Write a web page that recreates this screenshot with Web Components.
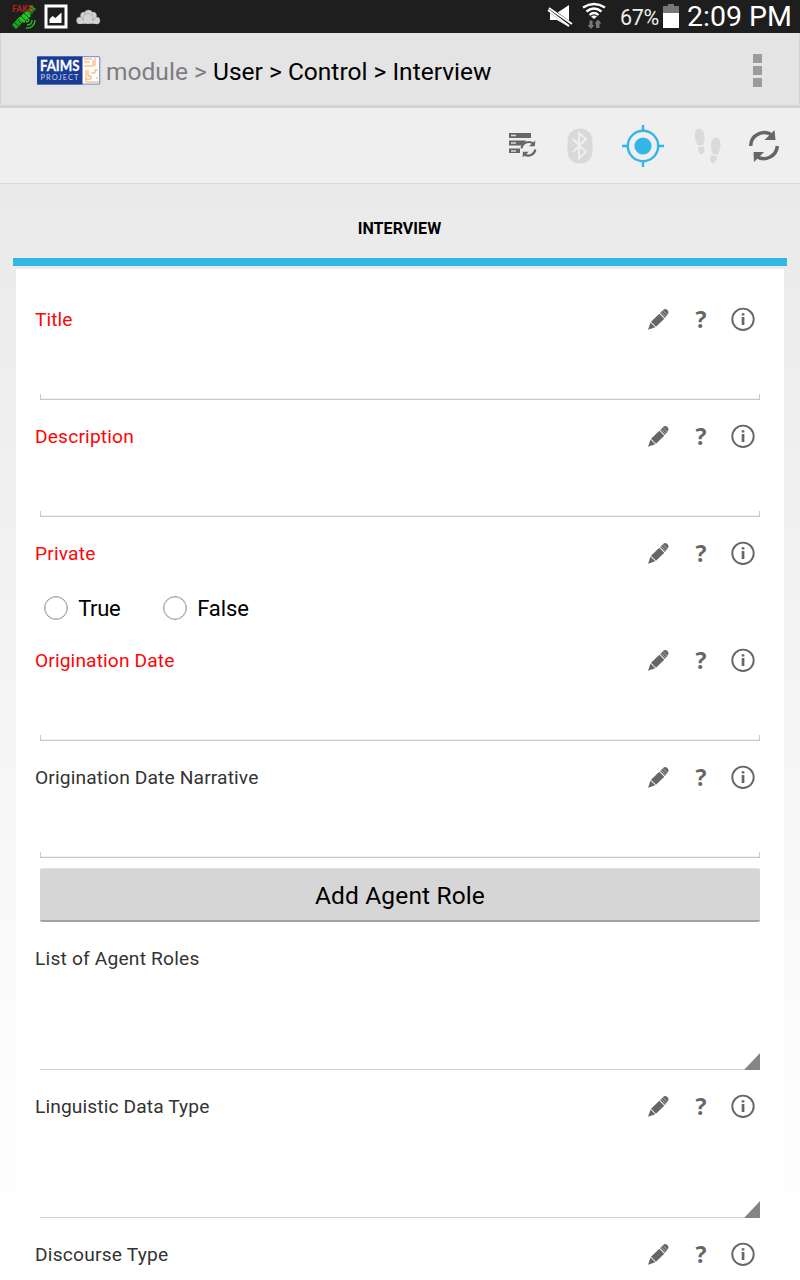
<!DOCTYPE html>
<html lang="en"><head><meta charset="utf-8"><title>Interview</title>
<style>html,body{margin:0;height:1280px;overflow:hidden;font-family:Roboto,"Noto Sans",sans-serif;color:#000}</style></head>
<body><faims-screen></faims-screen>
<script>
const define=(name,html,setup)=>customElements.define(name,class extends HTMLElement{
  connectedCallback(){
    if(this.shadowRoot)return;
    const t=document.createElement('template');t.innerHTML=html;
    this.attachShadow({mode:'open'}).append(t.content.cloneNode(true));
    if(setup)setup(this,this.shadowRoot);
  }
});

/* Text whose tracking is spread so that the line has the given width. */
define('tracked-text',`<style>:host{display:inline-block;white-space:pre}span{display:inline-block;white-space:pre}</style><span><slot></slot></span>`,(el,root)=>{
  const s=root.querySelector('span'),w=+el.getAttribute('width'),n=el.textContent.length;
  if(w)s.style.letterSpacing=((w-s.getBoundingClientRect().width)/n).toFixed(3)+'px';
});

const icons={
gps:[28,28,`<g transform="translate(0 1)"><path d="M1 21 8 13l5 4-8 8zM14 10l6-9 5 4-8 8z" fill="#18a51b"/><path d="m8 14 7-7 5 5-7 7z" fill="#1fc522"/><path d="m4 19 5 4M7 16l4 4M17 6l5 4M19 3l4 4M10 12l6 6M13 9l5 5" stroke="#174d17" stroke-width="1"/><path d="M15 24c5 1 9-3 9-8M16 21c3 0 5-2 5-5M15 18c2 0 3-1 3-3" fill="none" stroke="#26bd26" stroke-width="1.4"/><text x="1" y="8" textLength="21" lengthAdjust="spacingAndGlyphs" font-family="Roboto" font-weight="700" font-size="8.500" fill="#a82518">FAKE</text></g>`],
photo:[24,26,`<path d="M2 2h20v21H2z" fill="#1e1e1e" stroke="#fff" stroke-width="3"/><path d="M5.500 19v-4l3-3 3 2 6-5.500V19z" fill="#fff"/>`],
cloud:[25,16,`<g fill="#d2d2d2" stroke="#999" stroke-width=".5"><circle cx="4" cy="10.500" r="3.500"/><circle cx="20.500" cy="10.500" r="3.500"/><circle cx="8" cy="5.500" r="3.500"/><circle cx="17" cy="5.500" r="3.500"/><circle cx="12.500" cy="4" r="4"/><circle cx="12" cy="8.500" r="5"/></g><path d="M2 13.800q4-4 10-3 6-1 11 3z" fill="#d2d2d2"/>`],
mute:[24,24,`<path d="M1 8h7L20 0v22L8 15H1z" fill="#fff"/><path d="m0 4 23 17" stroke="#1e1e1e" stroke-width="5"/><path d="m0 3 23 16M-1 5l21 16" stroke="#fff" stroke-width="1.900" fill="none"/>`],
wifi:[24,26,`<g fill="none" stroke="#fff" stroke-width="2.300"><path d="M1 4.500q11-7 22 0M4.500 8.500q7.500-6 15 0M7.500 12q4.500-4 9 0"/></g><path d="m9 13.500 3 2.500 3-2.500q-3-2-6 0z" fill="#fff"/><path d="M7.500 17.500h3V22h2l-3.500 4L5.500 22h2zM14 25v-4.500h-1.500l3.500-4 3.500 4h-2V25z" fill="#777"/>`],
battery:[16,24,`<path d="M5 0h6v2h5v22H0V2h5z" fill="#777"/><path d="M0 9h16v15H0z" fill="#fff"/>`],
logo:[64,29,`<rect x=".7" y=".7" width="62" height="27.500" rx="1" fill="#fff" stroke="#899bcb" stroke-width="1.300"/><path d="M0 .500h45.500v28H0z" fill="#193c96"/><text x="3" y="15" textLength="39.500" lengthAdjust="spacingAndGlyphs" font-family="Lato" font-weight="700" font-size="15.500" fill="#fff" stroke="#fff" stroke-width=".3">FAIMS</text><text x="3.500" y="24" textLength="38" lengthAdjust="spacing" font-family="Lato" font-size="7.500" fill="#ccd5ed">PROJECT</text><g fill="none" stroke="#f6a55a" stroke-width="1"><path d="M47 3h8M47 6h6M47 10h9V4M58 2v8M49 14v12h13M51 14v6h3v3h-5M54 17h4v-3h3M59 22h2"/></g>`],
more:[12,36,`<path d="M1 1h9v9H1zM1 13h9v9H1zM1 25h9v9H1z" fill="#9b9b9b"/>`],
server:[30,28,`<path d="M1 1h22v5H1zM1 8.500h17l-4 5H1zM1 16.500h11v4.500H1z" fill="#666"/><path d="M3 3.500h5M3 11h5M3 19h5" stroke="#ddd" stroke-width="1.300"/><g transform="translate(12.500 8.500) scale(.53)"><path d="M2 15A13.500 13.500 0 0 1 24 6M28 17A13.500 13.500 0 0 1 7 26" fill="none" stroke="#666" stroke-width="4"/><path d="m28 0-1 11H16zM4 32l.500-11h11z" fill="#666"/></g>`],
bluetooth:[26,36,`<rect x=".5" y=".5" width="25" height="35" rx="12" fill="#d9d9d9"/><path d="m6 11 13 13-7 6V5l7 6L6 24" fill="none" stroke="#efefef" stroke-width="2"/>`],
locate:[42,44,`<g fill="none" stroke="#33b5e5"><circle cx="21" cy="22" r="15.200" stroke-width="2.400"/><path d="M21 1v6M21 37v6M0 22h6M36 22h6" stroke-width="2.400"/></g><circle cx="21" cy="22" r="8.600" fill="#33b5e5"/>`],
steps:[28,36,`<g fill="#dadada"><path d="M5 .500c4-.5 6 6 5.500 10 0 3-1 6-1.500 6.500l-5 .5C2 14 1 11 .8 8 .5 4 2 .8 5 .5zM4 19.500l6-1c1 4 0 7-2 7.500-3 .5-3.500-3-4-6.500zM22 9.500c-4 0-5.500 6-5 10 .2 3 1.500 6 2 6.500l4.500 1c2-3 2.500-6 3-9 .3-5-1.500-8.500-4.500-8.500zM17 27l6 1.500c-.5 4-2 7-4.500 6.500-3-.5-2.500-4-1.500-8z"/></g>`],
sync:[30,32,`<path d="M1.700 16A13.500 13.500 0 0 1 24 6M28.300 16A13.500 13.500 0 0 1 7 26" fill="none" stroke="#666" stroke-width="3.500"/><path d="M25.500 0 26.500 10H15.500zM5 32 4.500 22H15z" fill="#666"/>`],
pencil:[22,22,`<g transform="translate(0 .7)"><path d="M0 21 2.500 13.700 7.300 18.500z" fill="#666"/><path d="M3 13 11.300 5l5 5-8.300 8z" fill="#666"/><path d="M12 4.300 16 .6q1.500-1 3.400.8 2 2 .8 3.500L17 9.300z" fill="#666"/><path d="m13.300 3.500 4.500 4.500M15 1.800l4.500 4.500" stroke="#ccc" stroke-width=".7"/></g>`],
info:[24,24,`<circle cx="12" cy="12.300" r="10.700" fill="none" stroke="#666" stroke-width="1.900"/><path d="M10.700 6.300h2.700v2.200h-2.700zM10.700 10h2.700v8h-2.700z" fill="#666"/>`]
};
define('ui-icon','<style>:host{display:block;flex:none}svg{display:block;overflow:visible}</style><svg></svg>',(el,root)=>{
  const [w,h,p]=icons[el.getAttribute('name')],s=root.querySelector('svg');
  s.setAttribute('width',w);s.setAttribute('height',h);s.setAttribute('viewBox',`0 0 ${w} ${h}`);s.innerHTML=p;
});

define('status-bar',`<style>:host{display:flex;height:33px;background:#1e1e1e;color:#fff;box-sizing:border-box;padding:0 8px 0 11px}
.clock{font-size:28.5px;line-height:33px;margin-left:8px}.pct{font-size:21.5px;line-height:36px;margin-left:14px;color:#eee}</style>
<ui-icon name="gps" style="margin-top:3px"></ui-icon><ui-icon name="photo" style="margin:4px 0 0 5px"></ui-icon><ui-icon name="cloud" style="margin:10px 0 0 8px"></ui-icon><span style="flex:1"></span>
<ui-icon name="mute" style="margin-top:5px"></ui-icon><ui-icon name="wifi" style="margin:3px 0 0 9px"></ui-icon><tracked-text class="pct" width="39">67%</tracked-text><ui-icon name="battery" style="margin:4px 0 0 4px"></ui-icon><tracked-text class="clock" width="105">2:09 PM</tracked-text>`);

define('action-bar',`<style>:host{display:flex;align-items:center;height:75px;box-sizing:border-box;padding:0 35px 0 36px;background:#e4e4e4;border:solid #d3d3d3;border-width:0 1px 3px;font-size:24.5px;line-height:32px}
ui-icon{margin-top:2px}.m,.c{margin-top:5px}.m{color:#7d7c82;margin-left:5px}.r{flex:1}</style><ui-icon name="logo"></ui-icon><tracked-text class="m" width="107">module > </tracked-text><tracked-text class="c" width="278.5">User > Control > Interview</tracked-text><span class="r"></span><ui-icon name="more" style="margin-top:4px"></ui-icon>`);

define('tool-bar',`<style>:host{display:flex;align-items:center;justify-content:flex-end;height:76px;box-sizing:border-box;padding-right:21px;background:#efefef;border-bottom:1px solid #d9d9d9}</style>
<ui-icon name="server"></ui-icon><ui-icon name="bluetooth" style="margin-left:29px"></ui-icon><ui-icon name="locate" style="margin-left:29px"></ui-icon><ui-icon name="steps" style="margin-left:30px"></ui-icon><ui-icon name="sync" style="margin-left:27px"></ui-icon>`);

define('tab-strip',`<style>:host{display:block;height:85px;padding:0 13px}div{height:74px;box-sizing:content-box;display:flex;align-items:center;justify-content:center;font-weight:700;font-size:16px;border-bottom:8px solid #33b5e5}tracked-text{margin:14px 1px 0 0}</style><div><tracked-text width="83.5">INTERVIEW</tracked-text></div>`);

define('form-field',`<style>:host{display:block;color:#333}.l{height:48px;display:flex;align-items:center;padding:0 29px 0 19px;font-size:19.2px}.l tracked-text{padding-top:1px}:host([required]) .l{color:#fc0606}.r{flex:1}.q{width:12px;text-align:center;font:700 23px "Open Sans";line-height:48px;color:#666;margin:0 24px 0 25px}</style>
<div class="l"><tracked-text></tracked-text><span class="r"></span></div><slot></slot>`,(el,root)=>{
  const l=root.querySelector('.l'),old=l.firstElementChild,t=document.createElement('tracked-text');
  t.textContent=el.getAttribute('label');t.setAttribute('width',el.getAttribute('label-width'));old.replaceWith(t);
  if(!el.hasAttribute('plain'))l.insertAdjacentHTML('beforeend','<ui-icon name="pencil"></ui-icon><span class="q">?</span><ui-icon name="info"></ui-icon>');
});
define('text-line',`<style>:host{display:flex;height:69px;align-items:flex-start}div{flex:1;margin:51px 24px 0;border:1px solid #c8c8c8;border-top:0;box-sizing:border-box;height:6px;box-shadow:inset 0 -1px #f0f0f0}</style><div></div>`);
define('drop-down',`<style>:host{display:block;height:100px}div{height:87px;margin:0 24px;border-bottom:1px solid #d2d2d2;display:flex;justify-content:flex-end;align-items:flex-end}svg{display:block;margin-bottom:-1px}</style><div><svg width="16" height="17"><path d="M16 0v17H0z" fill="#858585"/></svg></div>`);
define('radio-option',`<style>:host{display:flex;align-items:center;font-size:22px;color:#000}i{width:24px;height:24px;box-sizing:border-box;border:1.5px solid #a4a4a4;border-radius:50%;margin:-2px 10px 0 0;box-shadow:inset 0 0 0 .5px #bbb}</style><i></i><slot></slot>`);
define('push-button',`<style>:host{display:flex;height:54px;margin:-2px 24px 12px;padding-top:2px;box-sizing:border-box;background:#d6d6d6;border:1px solid #e0e0e0;border-width:1px 0 2px;border-bottom-color:#a3a3a3;border-radius:2px;align-items:center;justify-content:center;font-size:24.5px;color:#000}</style><slot></slot>`);

define('faims-screen',`<style>:host{display:flex;flex-direction:column;height:1280px;overflow:hidden}
main{flex:1;min-height:0;background:linear-gradient(#eaeaea,#fdfdfd 85%,#fff)}.card{margin:0 16px;background:#fff;padding-top:26px}.radios{display:flex;height:59px;box-sizing:border-box;padding:4px 0 0 28.2px}.radios radio-option{width:119px}</style>
<status-bar></status-bar><action-bar></action-bar><tool-bar></tool-bar>
<main><tab-strip></tab-strip><div class="card">
<form-field label="Title" label-width="37.5" required><text-line></text-line></form-field>
<form-field label="Description" label-width="99" required><text-line></text-line></form-field>
<form-field label="Private" label-width="60.5" required><div class="radios"><radio-option><tracked-text width="42">True</tracked-text></radio-option><radio-option><tracked-text width="51.5">False</tracked-text></radio-option></div></form-field>
<form-field label="Origination Date" label-width="139.5" required><text-line></text-line></form-field>
<form-field label="Origination Date Narrative" label-width="223.5"><text-line></text-line></form-field>
<push-button><tracked-text width="170">Add Agent Role</tracked-text></push-button>
<form-field label="List of Agent Roles" label-width="164.5" plain><drop-down></drop-down></form-field>
<form-field label="Linguistic Data Type" label-width="174.5"><drop-down></drop-down></form-field>
<form-field label="Discourse Type" label-width="133.5"></form-field>
</div></main>`);
</script></body></html>
